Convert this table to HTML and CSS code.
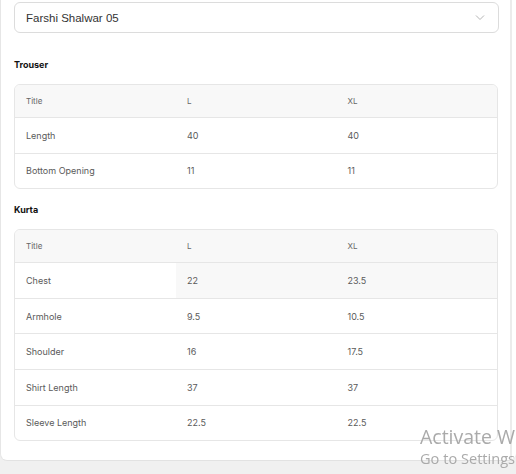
FILE: index.html
```html
<!DOCTYPE html>
<html>
<head>
<meta charset="utf-8">
<link rel="stylesheet" href="styles.css">
</head>
<body>
<div class="card">
  <div class="content">
    <div class="select">
      <span class="select-text">Farshi Shalwar 05</span>
      <svg class="chevron" width="10" height="7" viewBox="0 0 10 7"><path d="M1 1.5 L5 5.5 L9 1.5" fill="none" stroke="#b5b5b5" stroke-width="1"/></svg>
    </div>

    <h3 class="section-title trouser">Trouser</h3>
    <table class="size-table">
      <thead><tr><th>Title</th><th>L</th><th>XL</th></tr></thead>
      <tbody>
        <tr><td>Length</td><td>40</td><td>40</td></tr>
        <tr><td>Bottom Opening</td><td>11</td><td>11</td></tr>
      </tbody>
    </table>

    <h3 class="section-title kurta">Kurta</h3>
    <table class="size-table">
      <thead><tr><th>Title</th><th>L</th><th>XL</th></tr></thead>
      <tbody>
        <tr><td>Chest</td><td class="hl">22</td><td class="hl">23.5</td></tr>
        <tr><td>Armhole</td><td>9.5</td><td>10.5</td></tr>
        <tr><td>Shoulder</td><td>16</td><td>17.5</td></tr>
        <tr><td>Shirt Length</td><td>37</td><td>37</td></tr>
        <tr><td>Sleeve Length</td><td>22.5</td><td>22.5</td></tr>
      </tbody>
    </table>
  </div>
  <div class="gutter"></div>
</div>
<div class="watermark">
  <div class="wm-1">Activate Windows</div>
  <div class="wm-2">Go to Settings to activate Windows.</div>
</div>
</body>
</html>
```

FILE: styles.css
```css
html, body {
  margin: 0;
  padding: 0;
}
body {
  background: #f0f0f0;
  font-family: Inter, "Liberation Sans", sans-serif;
  width: 516px;
  height: 474px;
  overflow: hidden;
}
.card {
  display: flex;
  background: #ffffff;
  border-left: 1px solid #e6e6e6;
  border-bottom: 1px solid #e2e2e2;
  border-bottom-left-radius: 7px;
  border-bottom-right-radius: 7px;
  width: 515px;
}
.content {
  flex: 1;
  padding: 2px 11px 19px 13px;
}
.gutter {
  width: 2px;
  background: #ececec;
  margin-right: 4px;
}
.select {
  display: flex;
  align-items: center;
  justify-content: space-between;
  height: 29px;
  border: 1px solid #dcdcdc;
  border-radius: 6px;
  padding: 0 13px 0 11px;
}
.select-text {
  font-family: "Liberation Sans", Arial, sans-serif;
  font-size: 11.5px;
  color: #333;
}
.chevron {
  display: block;
}
.section-title {
  margin: 0;
  font-size: 9px;
  font-weight: 700;
  color: #111;
  line-height: 12px;
}
.trouser {
  padding: 26px 0 13px;
}
.kurta {
  padding: 15px 0 13px;
}
.size-table {
  width: 484px;
  border-collapse: separate;
  border-spacing: 0;
  border: 1px solid #e6e6e6;
  border-radius: 6px;
  overflow: hidden;
  table-layout: fixed;
}
.size-table th, .size-table td {
  text-align: left;
  padding: 0 11px;
  font-size: 9px;
  color: #5a5a5a;
  font-weight: 400;
}
.size-table th {
  background: #f8f8f8;
  height: 32px;
  font-size: 8px;
  color: #666;
}
.size-table td {
  height: 34.6px;
  border-top: 1px solid #e6e6e6;
}
.size-table th:first-child, .size-table td:first-child {
  width: 139px;
}
.size-table td.hl {
  background: #f8f8f8;
}
.watermark {
  position: fixed;
  left: 420px;
  top: 424px;
  white-space: nowrap;
  color: #aaaaaa;
  font-family: "Open Sans", "DejaVu Sans", sans-serif;
}
.wm-1 {
  font-size: 19.5px;
  line-height: 25px;
}
.wm-2 {
  font-size: 14.6px;
  line-height: 19px;
}
```
